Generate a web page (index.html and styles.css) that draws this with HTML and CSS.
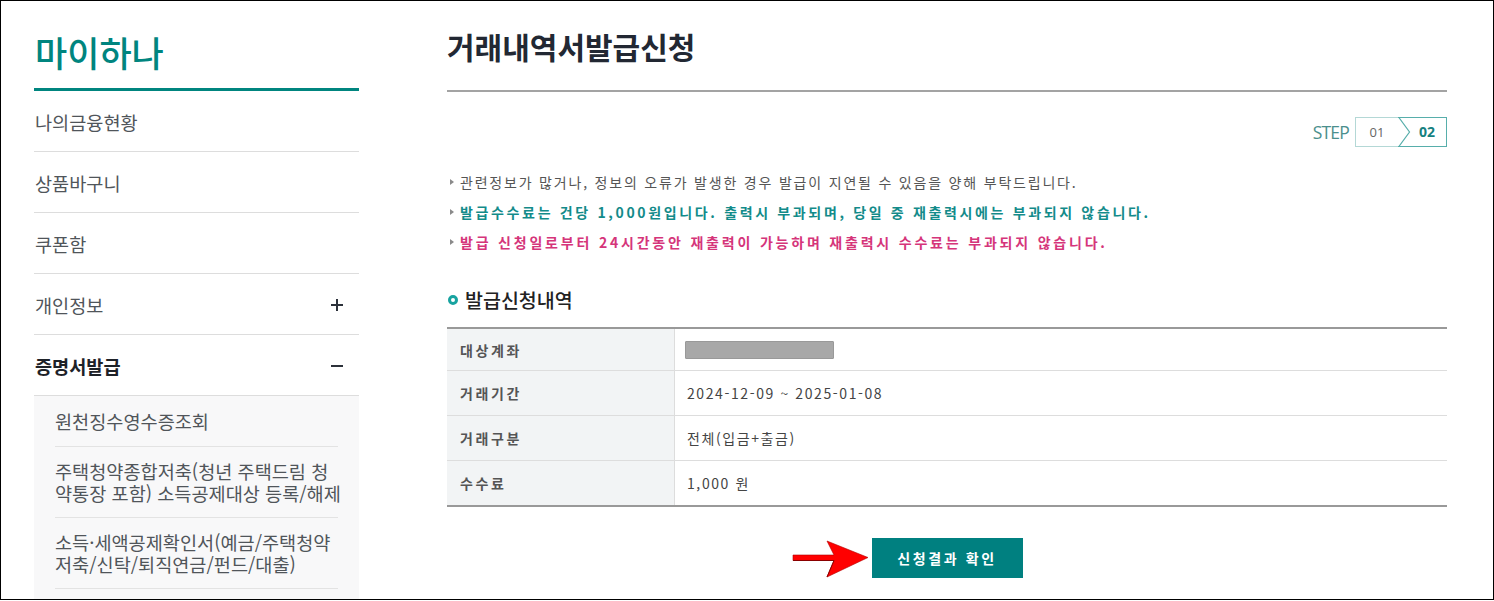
FILE: index.html
```html
<!DOCTYPE html>
<html lang="ko">

<head>
    <meta charset="UTF-8">
    <meta name="viewport" content="width=device-width, initial-scale=1.0">
    <title>거래내역서발급신청</title>
    <link rel="stylesheet" href="styles.css">
</head>

<body>

    <div class="frame">

        <aside class="side">
            <h1 class="side-title">마이하나</h1>
            <ul class="menu">
                <li class="menu-item">나의금융현황</li>
                <li class="menu-item">상품바구니</li>
                <li class="menu-item">쿠폰함</li>
                <li class="menu-item has-sub">개인정보<span class="toggle plus"></span></li>
                <li class="menu-item has-sub active">증명서발급<span class="toggle minus"></span></li>
            </ul>
            <ul class="sub-menu">
                <li>원천징수영수증조회</li>
                <li>주택청약종합저축(청년 주택드림 청<br>약통장 포함) 소득공제대상 등록/해제</li>
                <li>소득·세액공제확인서(예금/주택청약<br>저축/신탁/퇴직연금/펀드/대출)</li>
            </ul>
        </aside>

        <main class="content">
            <h2 class="page-title">거래내역서발급신청</h2>

            <div class="step-row">
                <span class="step-label">STEP</span>
                <div class="step-box">
                    <span class="step-num">01</span>
                    <span class="step-num current">
                        <svg class="chevron" width="13" height="30" viewBox="0 0 13 30">
                            <polyline points="0.5,0 11.5,15 0.5,30" fill="none" stroke="#57aeab" stroke-width="1.2" />
                        </svg>
                        02
                    </span>
                </div>
            </div>

            <ul class="notice">
                <li>관련정보가 많거나, 정보의 오류가 발생한 경우 발급이 지연될 수 있음을 양해 부탁드립니다.</li>
                <li class="teal">발급수수료는 건당 1,000원입니다. 출력시 부과되며, 당일 중 재출력시에는 부과되지 않습니다.</li>
                <li class="pink">발급 신청일로부터 24시간동안 재출력이 가능하며 재출력시 수수료는 부과되지 않습니다.</li>
            </ul>

            <h3 class="section-title">발급신청내역</h3>

            <table class="info-table">
                <tr class="first">
                    <th>대상계좌</th>
                    <td><span class="masked"></span></td>
                </tr>
                <tr>
                    <th>거래기간</th>
                    <td>2024-12-09 ~ 2025-01-08</td>
                </tr>
                <tr>
                    <th>거래구분</th>
                    <td>전체(입금+출금)</td>
                </tr>
                <tr>
                    <th>수수료</th>
                    <td>1,000 원</td>
                </tr>
            </table>

            <div class="btn-area">
                <div class="btn-wrap">
                    <svg class="arrow" width="78" height="40" viewBox="0 0 78 40">
                        <path d="M1 16 L42 16 L35 2 L76 18.5 L35 38 L42 21.5 L1 21.5 Z" fill="#ff0000" stroke="#b00000" stroke-width="0.6" />
                        <path d="M1 21.5 L42 21.5 L35 38" fill="none" stroke="#8a0000" stroke-width="1" />
                    </svg>
                    <button class="btn">신청결과 확인</button>
                </div>
            </div>
        </main>

    </div>

</body>

</html>
```

FILE: styles.css
```css
body {
    margin: 0;
    padding: 0;
    font-family: 'Noto Sans CJK KR', 'Noto Sans', sans-serif;
    background: #fff;
}

ul {
    list-style: none;
    margin: 0;
    padding: 0;
}

.frame {
    width: 1494px;
    height: 600px;
    box-sizing: border-box;
    border: 1px solid #000;
    display: flex;
    overflow: hidden;
}

/* 왼쪽 메뉴 */
.side {
    width: 325px;
    margin-left: 33px;
    flex-shrink: 0;
}

.side-title {
    margin: 0;
    padding: 29px 0 14px 1px;
    font-size: 35px;
    line-height: 44px;
    font-weight: 500;
    color: #00857f;
    border-bottom: 3px solid #00857f;
}

.menu-item {
    position: relative;
    height: 60px;
    line-height: 62px;
    padding-left: 1px;
    font-size: 18.6px;
    color: #50555a;
    border-bottom: 1px solid #ddd;
}

.menu-item.active {
    font-weight: 700;
    color: #1e2228;
}

.toggle {
    position: absolute;
    right: 16px;
    top: 30px;
    width: 12px;
    height: 1.5px;
    background: #2c313a;
}

.toggle.plus::after {
    content: '';
    position: absolute;
    left: 5.25px;
    top: -5.25px;
    width: 1.5px;
    height: 12px;
    background: #2c313a;
}

.sub-menu {
    background: #f8f8f9;
    padding: 0 21px 30px;
}

.sub-menu li {
    padding: 13px 0;
    font-size: 18.6px;
    line-height: 22px;
    white-space: nowrap;
    color: #50555a;
    border-bottom: 1px solid #e3e3e3;
}

.sub-menu li:first-child {
    padding: 14px 0;
}

/* 본문 */
.content {
    width: 1000px;
    margin-left: 88px;
}

.page-title {
    margin: 0;
    padding: 25px 0 24px;
    font-size: 30px;
    line-height: 40px;
    font-weight: 700;
    color: #222833;
    border-bottom: 2px solid #a3a3a3;
}

.step-row {
    display: flex;
    justify-content: flex-end;
    align-items: center;
    margin-top: 25px;
}

.step-label {
    font-family: 'Open Sans', sans-serif;
    font-size: 17.5px;
    letter-spacing: -0.8px;
    color: #4b8f8d;
    margin-right: 6px;
}

.step-box {
    display: flex;
    height: 30px;
}

.step-num {
    box-sizing: border-box;
    height: 30px;
    line-height: 28px;
    font-family: 'Open Sans', sans-serif;
    font-size: 13px;
    color: #666;
    width: 43px;
    text-align: center;
    border: 1px solid #b4d8d6;
    border-right: none;
}

.step-num.current {
    position: relative;
    width: 49px;
    padding-left: 10px;
    font-size: 14px;
    font-weight: 700;
    color: #16817f;
    border: 1px solid #57aeab;
    border-left: none;
}

.chevron {
    position: absolute;
    left: 0;
    top: -1px;
}

.notice {
    margin-top: 20px;
}

.notice li {
    position: relative;
    padding-left: 13px;
    font-size: 14px;
    line-height: 30px;
    letter-spacing: 1.8px;
    color: #555;
}

.notice li::before {
    content: '';
    position: absolute;
    left: 3px;
    top: 12px;
    border-left: 4px solid #8a8a8a;
    border-top: 3.5px solid transparent;
    border-bottom: 3.5px solid transparent;
}

.notice li.teal {
    font-weight: 700;
    letter-spacing: 2.65px;
    color: #138b8a;
}

.notice li.pink {
    font-weight: 700;
    letter-spacing: 2.8px;
    color: #d5357a;
}

.section-title {
    position: relative;
    margin: 30px 0 0;
    padding-left: 18px;
    font-size: 19.5px;
    line-height: 26px;
    font-weight: 500;
    color: #222;
}

.section-title::before {
    content: '';
    position: absolute;
    left: 1px;
    top: 8px;
    width: 4px;
    height: 4px;
    border: 3px solid #17a3a0;
    border-radius: 50%;
}

.info-table {
    width: 100%;
    margin-top: 14px;
    border-collapse: collapse;
    border-top: 2px solid #999;
    border-bottom: 2px solid #999;
    font-size: 14px;
}

.info-table th,
.info-table td {
    padding: 0 12px;
    height: 44px;
    border-bottom: 1px solid #ddd;
    text-align: left;
}

.info-table tr.first th,
.info-table tr.first td {
    height: 41px;
}

.info-table th {
    width: 202px;
    padding-left: 13px;
    background: #f2f4f5;
    border-right: 1px solid #ddd;
    font-weight: 700;
    letter-spacing: 2.6px;
    color: #555;
}

.info-table td {
    color: #444;
    letter-spacing: 1.6px;
}

.masked {
    display: block;
    width: 147px;
    height: 16px;
    margin-left: -2px;
    background: #a8a8a8;
    border: 1px solid #999;
    border-radius: 1px;
}

.btn-area {
    display: flex;
    justify-content: center;
    margin-top: 31px;
}

.btn-wrap {
    position: relative;
}

.btn {
    width: 151px;
    height: 40px;
    border: none;
    background: #008080;
    color: #fff;
    font-family: 'Noto Sans CJK KR', sans-serif;
    font-size: 14px;
    font-weight: 700;
    letter-spacing: 2.6px;
    cursor: pointer;
}

.arrow {
    position: absolute;
    right: 100%;
    top: 1px;
    margin-right: 2px;
}
```
